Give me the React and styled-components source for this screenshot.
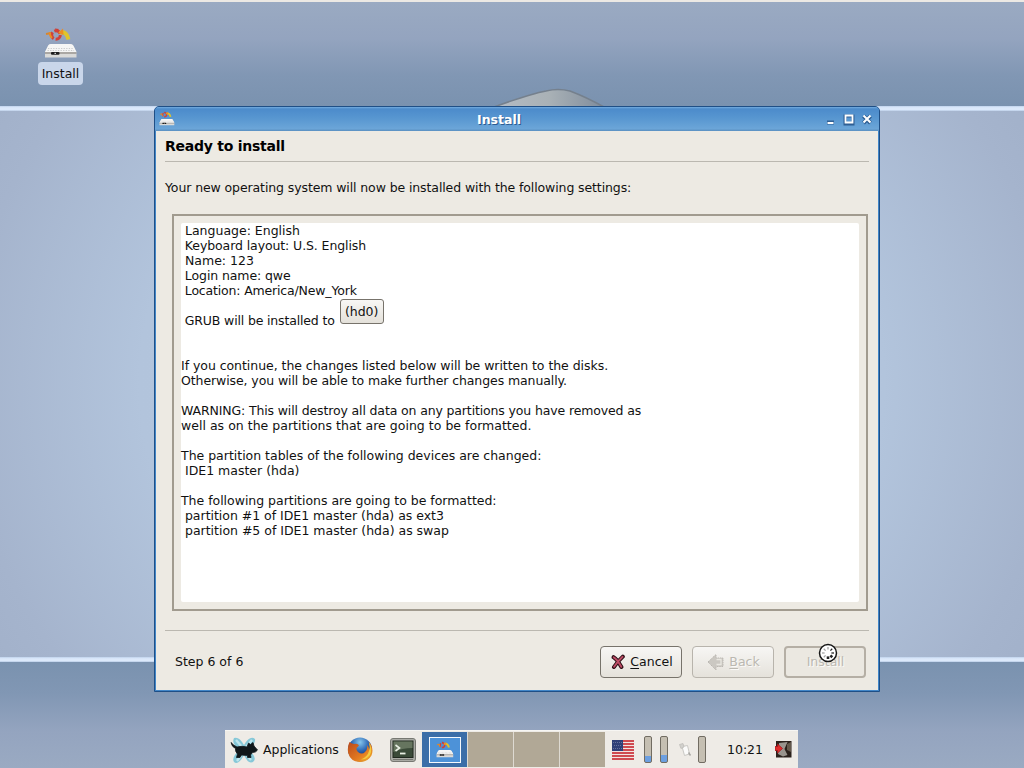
import React from "react";
import styled, { createGlobalStyle } from "styled-components";

const settings = [
    { text: " Language: English" },
    { text: " Keyboard layout: U.S. English", track: -0.1 },
    { text: " Name: 123" },
    { text: " Login name: qwe", track: -0.1 },
    { text: " Location: America/New_York", track: -0.17 },
];

const changes = [
    { text: "" },
    { text: "" },
    { text: "If you continue, the changes listed below will be written to the disks.", track: -0.045 },
    { text: "Otherwise, you will be able to make further changes manually.", track: -0.09 },
    { text: "" },
    { text: "WARNING: This will destroy all data on any partitions you have removed as", track: -0.137 },
    { text: "well as on the partitions that are going to be formatted.", track: 0.02 },
    { text: "" },
    { text: "The partition tables of the following devices are changed:", track: -0.01 },
    { text: " IDE1 master (hda)" },
    { text: "" },
    { text: "The following partitions are going to be formatted:", track: -0.02 },
    { text: " partition #1 of IDE1 master (hda) as ext3", track: -0.02 },
    { text: " partition #5 of IDE1 master (hda) as swap", track: -0.01 },
];

function DriveIcon({ size }) {
    return (
        <svg width={size} height={size} viewBox="0 0 34 34">
            <path d="M2 7 L7 6" stroke="#d9862c" strokeWidth="2" />
            <path d="M11 1.5 L15 2 L12 5Z" fill="#cf3a2a" />
            <circle cx="12" cy="8" r="4.3" fill="none" stroke="#d0423a" strokeWidth="3" strokeDasharray="7 2" />
            <path d="M6 5.5 A6 6 0 0 0 8 11" fill="none" stroke="#ea8b23" strokeWidth="2" />
            <path d="M16 6 Q22 3 24.5 12.5" fill="none" stroke="#dfc52c" strokeWidth="3.8" />
            <path d="M14 6 L19 1.5 L19.5 8Z" fill="#ec8d22" />
            <path d="M7 17 H26 Q29 17 30 20 L32.5 25 V30.5 H1 V25 L3.5 20 Q4.5 17 7 17Z" fill="#dadad8" />
            <path d="M7 17 H26 Q29 17 30 20 L32.5 25 H1 L3.5 20 Q4.5 17 7 17Z" fill="#f6f6f5" />
            <path d="M1 26 H32.5" stroke="#8a8580" strokeWidth="1.2" />
            <rect x="7" y="25" width="8.5" height="2.8" rx="1" fill="#1c1c1c" />
            <rect x="10.5" y="25.8" width="1.5" height="1.2" fill="#cfcfcf" />
            <path d="M4 21.5 H30 M3.5 23.5 H30" stroke="#cbcccc" strokeDasharray="1.3 1.3" />
        </svg>
    );
}

function CancelIcon() {
    return (
        <svg width="16" height="16" viewBox="0 0 16 16">
            <path d="M3.6 3.2 Q7 5 11.4 13 M12.8 2.6 Q8 7 4 13" fill="none" stroke="#2b0d14" strokeWidth="4" strokeLinecap="round" />
            <path d="M3.7 3.3 Q7 5 11.3 12.8 M12.6 2.8 Q8 7 4.1 12.8" fill="none" stroke="#bd4c66" strokeWidth="1.9" strokeLinecap="round" />
        </svg>
    );
}

function BackIcon() {
    return (
        <svg width="18" height="20" viewBox="0 0 18 20">
            <path d="M1 10 L9 2.5 V6 H16 V14.5 H9 V18Z" fill="#cbc8c2" stroke="#bab7b1" strokeDasharray="1.5 .8" />
            <path d="M9.5 7.5 H14 V12.5 H9.5" fill="none" stroke="#e9e7e1" strokeWidth="1.3" />
        </svg>
    );
}

function MouseIcon() {
    return (
        <svg width="28" height="30" viewBox="0 0 28 30">
            <path d="M4 3 Q9 1 14 10 Q20 0 25 4 Q26 9 18 15 Q27 21 24 26 Q19 31 14 20 Q8 31 4 27 Q1 22 10 15 Q1 9 4 3Z" fill="#86c8d8" />
            <path d="M6 5 L12 12 M22 5 L16 12 M7 26 L12 19 M21 25 L17 20" stroke="#bfe6ee" strokeWidth="2.4" />
            <path d="M1 7.5 Q4 11 7 12 Q12 10.5 17 12 L18.5 8 L20.5 9.5 L23 7.5 L24 11 L27.5 15 Q26 17.5 22.5 17.5 L20.5 20 L21 22.5 H17.5 V20.5 L11.5 20 L10 22.5 H6.5 L7.5 19 Q5 16.5 5.5 13.5 Q2 12 1 7.5Z" fill="#10171a" stroke="#10171a" strokeWidth=".8" />
        </svg>
    );
}

function FirefoxIcon() {
    return (
        <svg width="26" height="26" viewBox="0 0 26 26">
            <defs>
                <radialGradient id="globe" cx=".5" cy=".2" r=".6">
                    <stop offset="0" stopColor="#86c6ec" />
                    <stop offset=".6" stopColor="#2b66b4" />
                    <stop offset="1" stopColor="#15306e" />
                </radialGradient>
                <linearGradient id="fox" x1="0" y1="0" x2="1" y2="1">
                    <stop offset="0" stopColor="#b9481c" />
                    <stop offset=".6" stopColor="#e27a20" />
                    <stop offset="1" stopColor="#efb52f" />
                </linearGradient>
            </defs>
            <circle cx="13" cy="12.5" r="12" fill="url(#globe)" />
            <path d="M2.5 5 Q4 6.5 7 7 Q11 6 12 8.5 L9.5 11 Q9 13 11 15 Q15 18 18 15 Q21 12 20 8 Q22.5 10 22 14 Q24 11 21.5 4.5 Q27.5 11 24.5 18.5 Q20.5 25.5 12.5 25 Q3.5 24.5 1.2 16 Q0 10 2.5 5Z" fill="url(#fox)" />
            <path d="M22 5 Q26 12 23 18 Q19 23 14 22.5 Q20.5 20 22 14 Q23.5 10 22 5Z" fill="#f2cb40" />
        </svg>
    );
}

function TerminalIcon() {
    return (
        <svg width="26" height="24" viewBox="0 0 26 24">
            <rect x=".5" y=".5" width="25" height="23" rx="2.5" fill="#a9aaa4" stroke="#777872" />
            <rect x="3" y="3" width="20" height="16.5" fill="#3a4a38" stroke="#20281f" />
            <path d="M3.5 3.5 H22.5 V10 Q12 10 3.5 14Z" fill="#66755f" />
            <path d="M5.5 7 L9.5 10 L5.5 13" fill="none" stroke="#e9efe4" strokeWidth="1.6" />
            <path d="M10 15.5 H15.5" stroke="#e9efe4" strokeWidth="1.8" />
            <path d="M3 21.5 H23" stroke="#777872" />
        </svg>
    );
}

function FlagIcon() {
    return (
        <svg width="22" height="20" viewBox="0 0 22 20" shapeRendering="crispEdges">
            <rect width="22" height="20" fill="#f1e4e2" />
            {[0, 3, 6, 9, 12, 15, 18].map((y) => (
                <rect key={y} y={y} width="22" height="1.7" fill="#cf4a50" />
            ))}
            <rect width="11" height="11" fill="#2f3f78" />
            <path d="M1 2.5 H10 M2 5.5 H10 M1 8.5 H10" stroke="#66719c" strokeDasharray="1 1" />
        </svg>
    );
}

function NoteIcon() {
    return (
        <svg width="14" height="16" viewBox="0 0 14 16">
            <path d="M4 4.5 L9.5 3.5 L11.5 12 L6.5 13.5Z" fill="#fbfbfa" stroke="#c9c8c4" />
            <path d="M1.5 2.5 L5 1.5 L6 5 L3 6.5Z" fill="#d2d1cd" stroke="#bab9b5" strokeWidth=".7" />
            <path d="M10.5 10.5 L12.5 13.5" stroke="#a9a8a4" strokeWidth="1.5" />
        </svg>
    );
}

function ExitIcon() {
    return (
        <svg width="17" height="17" viewBox="0 0 17 17">
            <rect x="1" y="0" width="15.5" height="16.5" fill="#2a211b" />
            <path d="M12 3 L16 1 V11 L12 9Z" fill="#64594c" />
            <path d="M4 2 L12.5 1 L9.5 8 L12.5 14 L8 15.5 L3 13Z" fill="#99948d" />
            <path d="M0 5.5 H2.5 V3 L7.5 7.5 L2.5 12 V9.5 H0Z" fill="#e02c2c" stroke="#a5171c" strokeWidth=".8" />
        </svg>
    );
}

function BusyCursor() {
    const ticks = [0, 1, 2, 3, 4, 5, 6, 7];
    return (
        <svg width="20" height="20" viewBox="0 0 20 20">
            <circle cx="10" cy="10" r="8.5" fill="#fff" stroke="#161616" strokeWidth="1.5" />
            {ticks.map((t) => (
                <path
                    key={t}
                    d="M10 4 V6.6"
                    transform={`rotate(${t * 45} 10 10)`}
                    stroke={t > 0 && t < 5 ? "#222" : "#a5a5a5"}
                    strokeWidth={t > 2 && t < 5 ? 2.6 : 1.3}
                />
            ))}
        </svg>
    );
}

function WindowControls() {
    return (
        <svg width="50" height="14" viewBox="0 0 50 14">
            <g stroke="#2f5f94" strokeWidth="4" fill="none">
                <path d="M5 10.5 H12" />
                <path d="M23 4 H31 V12 H23Z" strokeWidth="3" />
                <path d="M41.5 4 L48.5 11 M48.5 4 L41.5 11" />
            </g>
            <g stroke="#fff" strokeWidth="2" fill="none">
                <path d="M5.5 11 H11.5" />
                <path d="M23.5 3.5 H30.5 V10.5 H23.5Z" strokeWidth="1.8" />
                <path d="M41.5 3.5 L48.5 10.5 M48.5 3.5 L41.5 10.5" />
            </g>
        </svg>
    );
}

export default function App() {
    return (
        <Desktop>
            <GlobalStyle />
            <TopEdge />
            <Band />
            <Stripe />
            <Sky />
            <Stripe />
            <Band $flip />

            <Hill width="120" height="20" viewBox="0 0 120 20">
                <defs>
                    <linearGradient id="hill" x1="0" y1="0" x2="1" y2="0">
                        <stop offset="0" stopColor="#b5bcc4" />
                        <stop offset=".5" stopColor="#a9b1b6" />
                        <stop offset="1" stopColor="#7f8c9c" />
                    </linearGradient>
                </defs>
                <path d="M4 19 Q40 6 56 3 Q68 0 80 3 Q96 9 114 19Z" fill="url(#hill)" />
                <path d="M4 19 Q40 6 56 3 Q68 0 80 3 Q96 9 114 19" fill="none" stroke="#75808d" strokeWidth="1.5" />
            </Hill>

            <Shortcut>
                <DriveIcon size={34} />
                <ShortcutLabel>Install</ShortcutLabel>
            </Shortcut>

            <Window>
                <TitleBar>
                    <DriveIcon size={16} />
                    <Title>Install</Title>
                    <WindowControls />
                </TitleBar>
                <Body>
                    <Heading>Ready to install</Heading>
                    <Rule />
                    <Intro>Your new operating system will now be installed with the following settings:</Intro>
                    <Frame>
                        <Summary>
                            {settings.map((line, i) => (
                                <Line key={i} $track={line.track}>{line.text}</Line>
                            ))}
                            <GrubRow>
                                <Line $track={-0.16}> GRUB will be installed to</Line>
                                <GrubButton>(hd0)</GrubButton>
                            </GrubRow>
                            {changes.map((line, i) => (
                                <Line key={i} $track={line.track}>{line.text}</Line>
                            ))}
                        </Summary>
                    </Frame>
                    <Rule />
                    <Footer>
                        <Step>Step 6 of 6</Step>
                        <Button>
                            <CancelIcon />
                            <span><u>C</u>ancel</span>
                        </Button>
                        <Button disabled>
                            <BackIcon />
                            <span><u>B</u>ack</span>
                        </Button>
                        <Button disabled $default>
                            <span>Install</span>
                            <Busy><BusyCursor /></Busy>
                        </Button>
                    </Footer>
                </Body>
            </Window>

            <Panel>
                <MouseIcon />
                <MenuLabel>Applications</MenuLabel>
                <Launcher $gap="8px"><FirefoxIcon /></Launcher>
                <Launcher $gap="17px"><TerminalIcon /></Launcher>
                <Pager>
                    <Workspace $active>
                        <MiniWindow><DriveIcon size={18} /></MiniWindow>
                    </Workspace>
                    <Workspace />
                    <Workspace />
                    <Workspace />
                </Pager>
                <FlagIcon />
                <Gauge $gap="10px" $level="6px" />
                <Gauge $gap="8px" $level="7px" />
                <Launcher $gap="10px"><NoteIcon /></Launcher>
                <Gauge $gap="6px" $level="0px" />
                <Clock>10:21</Clock>
                <ExitIcon />
            </Panel>
        </Desktop>
    );
}

const GlobalStyle = createGlobalStyle`
body {
    margin: 0;
    overflow: hidden;
}
svg {
    display: block;
    flex-shrink: 0;
}
`;

const Desktop = styled.div`
position: relative;
display: flex;
flex-direction: column;
width: 1024px;
height: 768px;
overflow: hidden;
font-family: "DejaVu Sans", sans-serif;
font-size: 12.5px;
line-height: 15px;
color: #111;
`;

const TopEdge = styled.div`
height: 2px;
background: #ece9e4;
`;

const Band = styled.div`
height: ${(p) => (p.$flip ? "106px" : "104px")};
background: linear-gradient(${(p) => (p.$flip ? "0deg" : "180deg")}, #9aaac2 0%, #94a4bf 35%, #8197b4 70%, #7a92af 100%);
`;

const Stripe = styled.div`
height: 5px;
background: linear-gradient(#bfd2ec, #dce9fb 35%, #dce9fb 70%, #b9cce6);
`;

const Sky = styled.div`
height: 546px;
background: radial-gradient(ellipse 620px 560px at 50% 50%, #b8cae2 0%, #b2c4dc 60%, #a5b4cd 88%, #a1b0c9 100%);
`;

const Hill = styled.svg`
position: absolute;
left: 490px;
top: 88px;
`;

const Shortcut = styled.div`
position: absolute;
left: 38px;
top: 27px;
width: 45px;
display: flex;
flex-direction: column;
align-items: center;
`;

const ShortcutLabel = styled.span`
margin-top: 1px;
width: 45px;
height: 23px;
line-height: 23px;
text-align: center;
border-radius: 4px;
background: #c9d6ea;
`;

const Window = styled.div`
position: absolute;
left: 154px;
top: 106px;
width: 726px;
height: 586px;
box-sizing: border-box;
display: flex;
flex-direction: column;
border: 1px solid #1f4f86;
border-radius: 5px 5px 0 0;
background: #4186c8;
`;

const TitleBar = styled.div`
height: 24px;
display: flex;
align-items: center;
padding: 0 7px 0 4px;
border-radius: 4px 4px 0 0;
background: linear-gradient(#75addf 0, #4c8bcb 8%, #5796d0 45%, #6ba5d8 90%, #5a8fc0 100%);
`;

const Title = styled.div`
flex: 1;
padding-left: 1px;
text-align: center;
font-weight: bold;
color: #fff;
text-shadow: 1px 1px 0 #2c5c92;
`;

const Body = styled.div`
flex: 1;
margin: 0 1px 1px 1px;
padding: 0 9px;
display: flex;
flex-direction: column;
background: #edeae3;
`;

const Heading = styled.div`
height: 30px;
line-height: 30px;
font-size: 14px;
font-weight: bold;
letter-spacing: -0.25px;
color: #000;
`;

const Rule = styled.div`
height: 1px;
background: #bbb8b0;
`;

const Intro = styled.div`
height: 52px;
line-height: 52px;
letter-spacing: -0.104px;
white-space: nowrap;
`;

const Frame = styled.div`
height: 397px;
box-sizing: border-box;
margin: 0 1px 19px 7px;
padding: 7px;
border: 2px solid #a19b8f;
`;

const Summary = styled.div`
height: 379px;
box-sizing: border-box;
border-radius: 2px;
background: #fff;
`;

const Line = styled.div`
height: 15px;
white-space: pre;
letter-spacing: ${(p) => p.$track || 0}px;
`;

const GrubRow = styled.div`
height: 30px;
display: flex;
align-items: flex-end;
`;

const GrubButton = styled.button`
width: 44px;
height: 25px;
margin: 0 0 4px 5px;
padding: 0;
border: 1px solid #77736b;
border-radius: 3px;
background: linear-gradient(#f8f7f5, #e4e1da);
font: inherit;
color: inherit;
`;

const Footer = styled.div`
display: flex;
align-items: center;
padding: 15px 3px 0 10px;
gap: 10px;
`;

const Step = styled.div`
flex: 1;
padding-bottom: 2px;
`;

const Button = styled.button`
position: relative;
width: 82px;
height: 32px;
box-sizing: border-box;
display: flex;
align-items: center;
justify-content: center;
gap: 4px;
padding: 0 0 1px 1px;
font: inherit;
border-radius: 4px;
border: ${(p) => (p.$default ? "2px solid #b5afa5" : p.disabled ? "1px solid #b8b4ac" : "1px solid #77736b")};
background: ${(p) => (p.$default ? "#ebe8e1" : "linear-gradient(#f7f6f4, #e5e2db)")};
color: ${(p) => (p.disabled ? "#bbb8b1" : "#111")};
text-shadow: ${(p) => (p.disabled ? "1px 1px 0 #fbfaf8" : "none")};

u {
    text-underline-offset: 2px;
}
`;

const Busy = styled.div`
position: absolute;
left: 32px;
top: -5px;
`;

const Panel = styled.div`
position: absolute;
left: 225px;
top: 730px;
width: 573px;
height: 38px;
box-sizing: border-box;
display: flex;
align-items: center;
padding-left: 5px;
border-top: 1px solid #f7f6f3;
background: #eeebe6;
`;

const MenuLabel = styled.span`
margin-left: 5px;
width: 76px;
letter-spacing: -0.05px;
`;

const Launcher = styled.div`
margin-left: ${(p) => p.$gap};
`;

const Pager = styled.div`
display: flex;
gap: 1px;
height: 35px;
margin: 0 7px 0 6px;
background: #dedad2;
`;

const Workspace = styled.div`
width: 45px;
display: flex;
align-items: center;
justify-content: center;
background: ${(p) => (p.$active ? "#3b6ea8" : "#b1a896")};
`;

const MiniWindow = styled.div`
width: 30px;
height: 24px;
display: flex;
align-items: center;
justify-content: center;
border: 1px solid #f4f8fc;
background: #4d92d8;
`;

const Gauge = styled.div`
width: 8px;
height: 27px;
box-sizing: border-box;
margin-left: ${(p) => p.$gap};
border: 1px solid #716c62;
border-radius: 2px;
background: linear-gradient(to top, #6c9fe0 ${(p) => p.$level}, #c5bfb2 ${(p) => p.$level});
`;

const Clock = styled.span`
width: 36px;
margin: 0 12px 0 21px;
`;
